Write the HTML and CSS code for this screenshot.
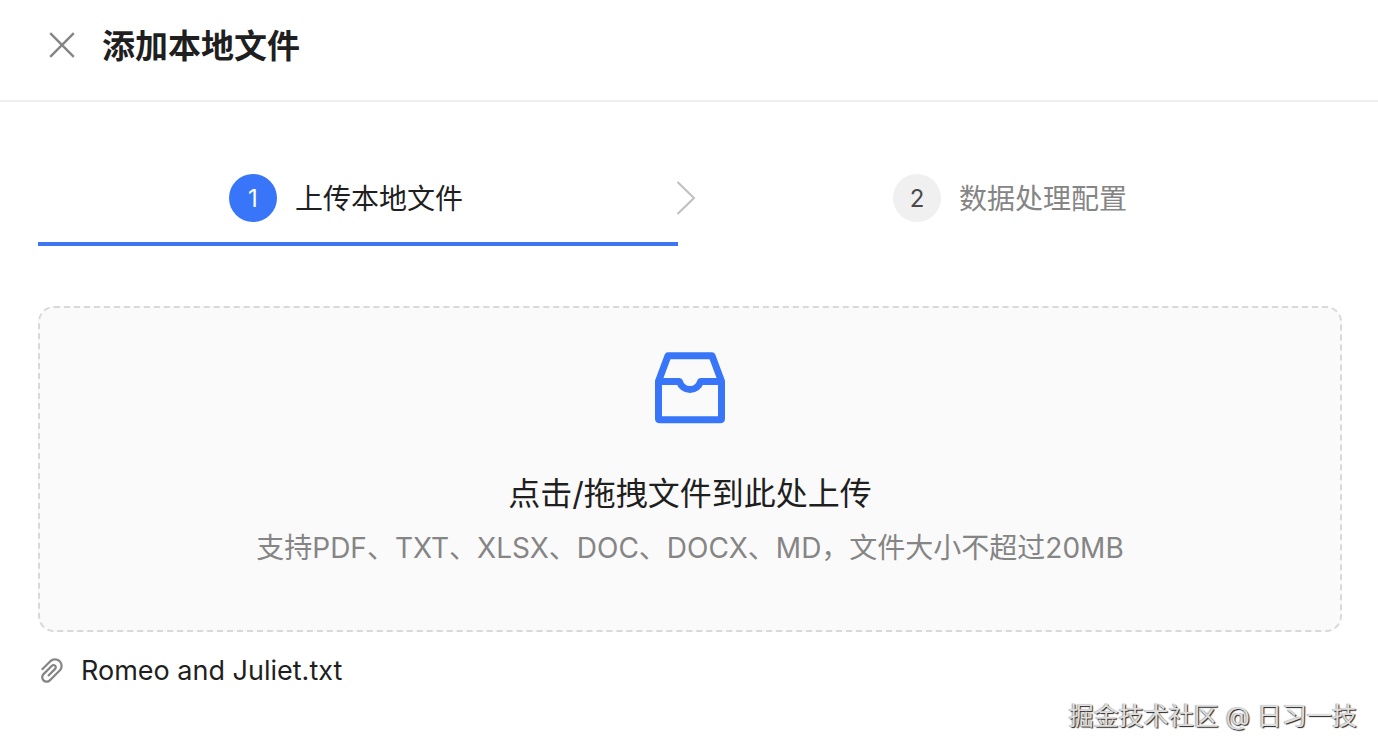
FILE: index.html
```
<!DOCTYPE html>
<html lang="zh-CN">
<head>
<meta charset="utf-8">
<meta name="viewport" content="width=device-width, initial-scale=1">
<title>添加本地文件</title>
<link rel="stylesheet" href="styles.css">
</head>
<body>
<header class="header">
  <button class="close" type="button" aria-label="关闭">
    <svg width="28" height="28" viewBox="0 0 28 28" fill="none" stroke="currentColor" stroke-width="2.4"><path d="M2.2 2.2 25.8 25.8M25.8 2.2 2.2 25.8"/></svg>
  </button>
  <h1 class="title">添加本地文件</h1>
</header>
<main class="main">
  <ol class="steps">
    <li class="step step-active" aria-current="step">
      <span class="step-number">1</span>
      <span class="step-title">上传本地文件</span>
      <svg class="step-arrow" width="20" height="36" viewBox="0 0 20 36" fill="none" stroke="currentColor" stroke-width="2"><path d="M1.5 2 18 18 1.5 34"/></svg>
    </li>
    <li class="step">
      <span class="step-number">2</span>
      <span class="step-title">数据处理配置</span>
    </li>
  </ol>
  <button class="upload" type="button">
    <svg class="upload-icon" width="72" height="72" viewBox="0 0 72 72" fill="none" stroke="currentColor" stroke-width="7" stroke-linejoin="round"><path d="M4.500 29.200 14 3.800H58L67.500 29.200V66.500Q67.500 67.800 66.200 67.800H5.800Q4.500 67.800 4.500 66.500Z"/><path d="M4.500 29.400H25.400A11 11 0 0 0 46.600 29.400H67.500"/></svg>
    <span class="upload-title">点击/拖拽文件到此处上传</span>
    <span class="upload-hint">支持PDF、TXT、XLSX、DOC、DOCX、MD，文件大小不超过20MB</span>
  </button>
  <div class="file">
    <svg width="22" height="25" viewBox="170 120 690 784" fill="currentColor" aria-hidden="true"><path d="M779.3 196.6c-94.2-94.2-247.6-94.2-341.7 0l-261 260.8c-1.7 1.7-2.600 4-2.600 6.400s.9 4.700 2.600 6.400l36.900 36.900a9 9 0 0 0 12.700 0l261-260.800c32.400-32.400 75.500-50.200 121.300-50.200s88.900 17.800 121.200 50.200c32.400 32.400 50.200 75.500 50.200 121.200 0 45.800-17.800 88.800-50.200 121.200l-266 265.900-43.100 43.100c-40.300 40.300-105.800 40.300-146.100 0-19.500-19.500-30.200-45.400-30.200-73s10.700-53.500 30.200-73l263.900-263.800c6.700-6.600 15.500-10.300 24.900-10.300h.1c9.400 0 18.100 3.700 24.700 10.300 6.700 6.700 10.300 15.500 10.300 24.900 0 9.300-3.700 18.100-10.300 24.700L372.400 653c-1.700 1.700-2.600 4-2.600 6.400s.9 4.700 2.600 6.400l36.900 36.900a9 9 0 0 0 12.700 0l215.600-215.600c19.900-19.900 30.800-46.300 30.800-74.400s-11-54.600-30.800-74.400c-41.100-41.100-107.900-41-149 0L463 364 224.800 602.100A172.220 172.220 0 0 0 174 724.800c0 46.300 18.100 89.800 50.800 122.500 33.900 33.800 78.300 50.700 122.700 50.700 44.400 0 88.800-16.900 122.600-50.700l309.200-309C824.800 492.700 850 432 850 367.500c.1-64.600-25.100-125.300-70.700-170.900z"/></svg>
    <span class="file-name">Romeo and Juliet.txt</span>
  </div>
</main>
<footer class="credit">掘金技术社区 @ 日习一技</footer>
</body>
</html>
```
FILE: styles.css
```
* { box-sizing: border-box; }

body {
  margin: 0;
  background: #fff;
  color: #1f1f1f;
  font-family: Inter, "Noto Sans CJK SC", sans-serif;
  font-size: 28px;
  line-height: 44px;
}

button {
  border: 0;
  padding: 0;
  color: inherit;
  font: inherit;
  cursor: pointer;
}

svg { display: block; }

.header {
  display: flex;
  align-items: center;
  gap: 26px;
  padding: 20px 48px 30px;
  border-bottom: 2px solid #eee;
}

.close {
  background: none;
  color: #858585;
}

.title {
  margin: 0;
  padding-top: 2px;
  font-size: 33px;
  line-height: 48px;
  font-weight: 700;
}

.main { padding: 72px 36px 0 38px; }

.steps {
  display: flex;
  margin: 0 0 60px -24px;
  padding: 0;
  list-style: none;
}

.step {
  position: relative;
  flex: 1;
  display: flex;
  justify-content: center;
  align-items: center;
  gap: 18px;
  padding-bottom: 24px;
  color: #858585;
}

.step-active { color: #1f1f1f; }

.step-active::after {
  content: "";
  position: absolute;
  left: 24px;
  right: 0;
  bottom: 0;
  height: 4px;
  background: #3f75f0;
}

.step-number {
  display: grid;
  place-items: center;
  width: 48px;
  height: 48px;
  padding-top: 2px;
  border-radius: 50%;
  background: #f0f0f0;
  color: #4a4a4a;
  font-size: 24px;
}

.step-title { padding-top: 2px; }

.step-active .step-number {
  background: #3875f8;
  color: #fff;
}

.step-arrow {
  position: absolute;
  left: 100%;
  top: 6px;
  margin-left: -2px;
  color: #bfbfbf;
}

.upload {
  display: flex;
  flex-direction: column;
  align-items: center;
  width: 100%;
  padding: 44px 24px 60px;
  border: 2px dashed #d9d9d9;
  border-radius: 16px;
  background: #fafafa;
}

.upload-icon { color: #3875f8; }

.upload-title {
  margin-top: 44px;
  font-size: 32px;
  line-height: 52px;
}

.upload-hint {
  margin-top: 6px;
  color: #858585;
}

.file {
  display: flex;
  align-items: center;
  gap: 18px;
  padding: 16px 3px 0;
  color: #858585;
}

.file-name {
  padding-top: 1px;
  color: #1f1f1f;
  font-size: 27px;
}

.credit {
  padding: 5px 21px 0;
  color: #dedede;
  font-size: 25px;
  line-height: 36px;
  text-align: right;
  text-shadow: 1px 1px 1px #222, -1px 0 1px #aaa;
}
```
